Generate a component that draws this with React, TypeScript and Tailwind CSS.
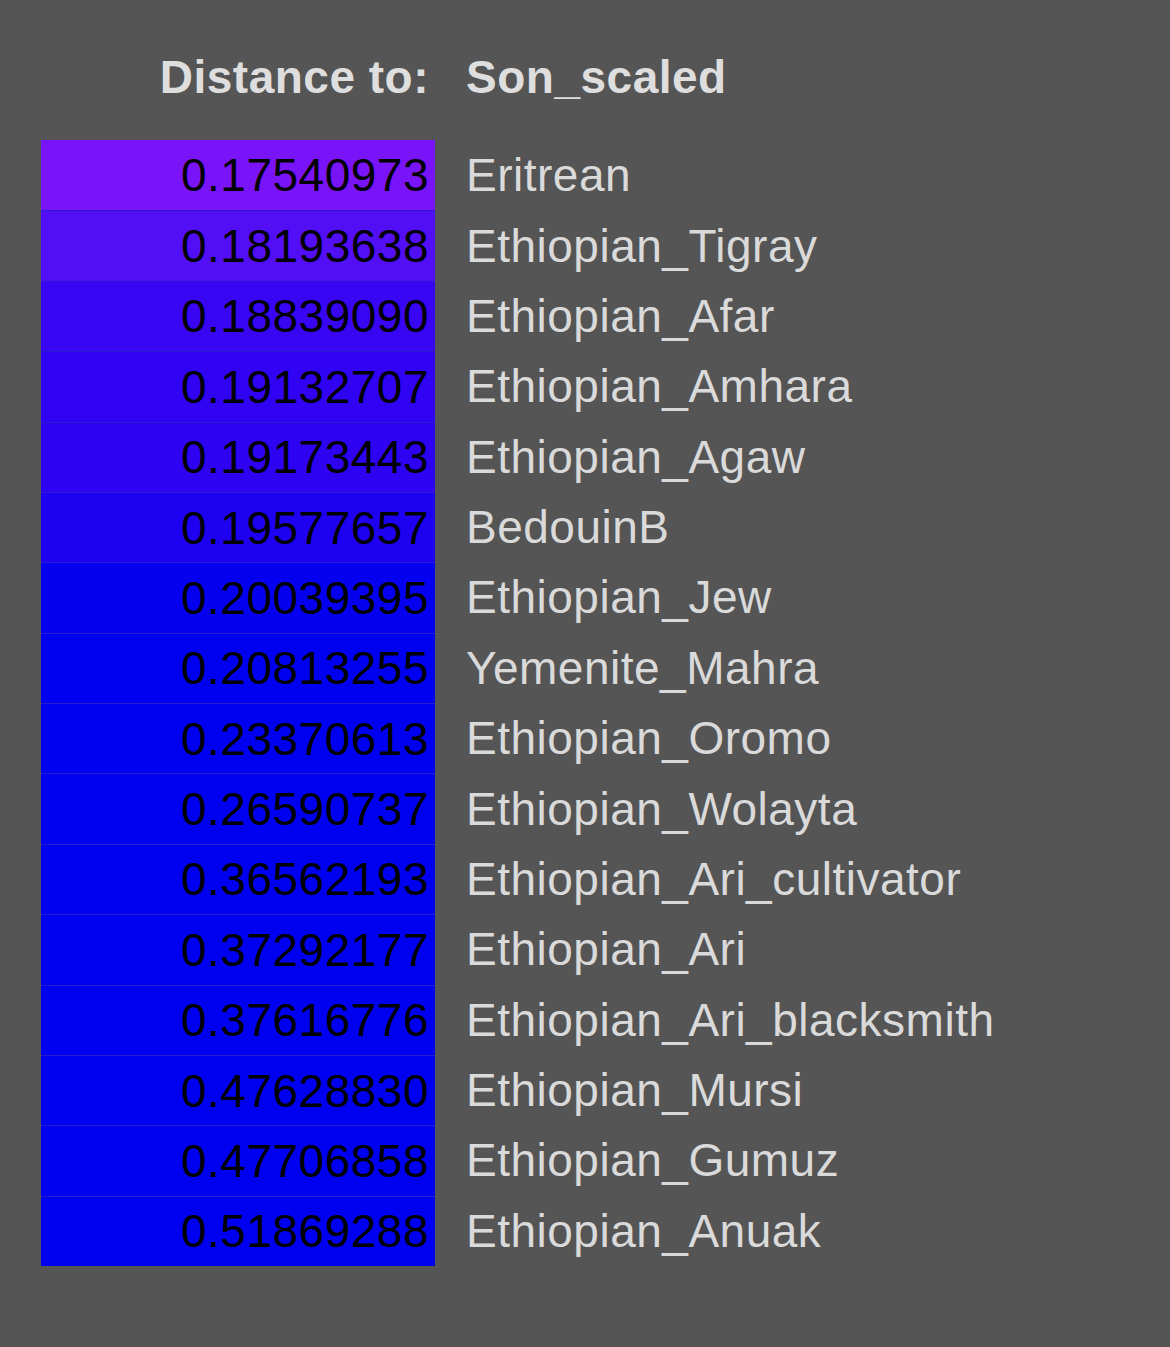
const rows = [
  { value: '0.17540973', name: 'Eritrean', color: '#7a14f8' },
  { value: '0.18193638', name: 'Ethiopian_Tigray', color: '#520ff5' },
  { value: '0.18839090', name: 'Ethiopian_Afar', color: '#3906f3' },
  { value: '0.19132707', name: 'Ethiopian_Amhara', color: '#3004f2' },
  { value: '0.19173443', name: 'Ethiopian_Agaw', color: '#2e03f2' },
  { value: '0.19577657', name: 'BedouinB', color: '#1f01f1' },
  { value: '0.20039395', name: 'Ethiopian_Jew', color: '#0600f0' },
  { value: '0.20813255', name: 'Yemenite_Mahra', color: '#0000f0' },
  { value: '0.23370613', name: 'Ethiopian_Oromo', color: '#0000f0' },
  { value: '0.26590737', name: 'Ethiopian_Wolayta', color: '#0000f0' },
  { value: '0.36562193', name: 'Ethiopian_Ari_cultivator', color: '#0000f0' },
  { value: '0.37292177', name: 'Ethiopian_Ari', color: '#0000f0' },
  { value: '0.37616776', name: 'Ethiopian_Ari_blacksmith', color: '#0000f0' },
  { value: '0.47628830', name: 'Ethiopian_Mursi', color: '#0000f0' },
  { value: '0.47706858', name: 'Ethiopian_Gumuz', color: '#0000f0' },
  { value: '0.51869288', name: 'Ethiopian_Anuak', color: '#0000f0' },
]

export default function App() {
  return (
    <div className="w-[1170px] h-[1347px] bg-[#555555] pt-[42px] pl-[41px] font-['Liberation_Sans',Arial,sans-serif] text-[46px] leading-none tracking-[0.5px]">
      {/* header */}
      <div className="flex h-[70px] items-center font-bold text-[#dedede]">
        <div className="w-[394px] pr-[6px] text-right">Distance to:</div>
        <div className="pl-[31px]">Son_scaled</div>
      </div>

      {/* rows */}
      <div className="mt-[28px] flex flex-col">
        {rows.map((r, i) => (
          <div key={r.value} className="flex h-[70.375px]">
            <div
              className={
                'w-[394px] pr-[6px] flex items-center justify-end text-black ' +
                (i > 0 ? 'border-t border-[#2a1ccc]' : '')
              }
              style={{ backgroundColor: r.color }}
            >
              {r.value}
            </div>
            <div className="pl-[31px] flex items-center text-[#dadada]">{r.name}</div>
          </div>
        ))}
      </div>
    </div>
  )
}
